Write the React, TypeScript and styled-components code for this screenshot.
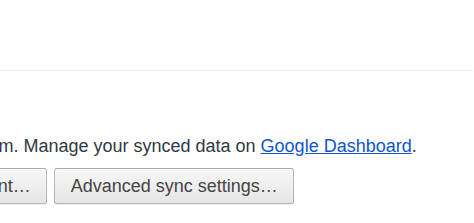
import React from "react";
import styled, { createGlobalStyle } from "styled-components";

const Global = createGlobalStyle`
  html, body { margin: 0; padding: 0; background: #fff; overflow: hidden; }
  body { width: 474px; height: 223px; }
`;

const Page = styled.div`
  width: 474px;
  height: 223px;
  overflow: hidden;
  font-family: "Liberation Sans", Arial, sans-serif;
  color: #303942;
`;

const TopArea = styled.div`
  height: 70px;
  width: 473px;
  border-bottom: 1px solid #eeeeee;
`;

const Section = styled.div`
  margin-left: -265px;
  padding-top: 63px;
  display: flex;
  flex-direction: column;
  gap: 10px;
`;

const Para = styled.p`
  margin: 0;
  font-size: 18px;
  line-height: 24px;
  white-space: nowrap;
`;

const Link = styled.a`
  color: #1155cc;
  text-decoration: underline;
`;

const ButtonRow = styled.div`
  display: flex;
  gap: 7px;
`;

const Button = styled.button`
  height: 36px;
  padding: 0 15.5px;
  font-family: "Liberation Sans", Arial, sans-serif;
  font-size: 18px;
  color: #444;
  background: linear-gradient(#f7f7f7, #e6e6e6);
  border: 1px solid rgba(0, 0, 0, 0.25);
  border-radius: 3px;
  box-shadow: 0 1px 0 rgba(0, 0, 0, 0.08), inset 0 1px 2px rgba(255, 255, 255, 0.75);
  white-space: nowrap;
`;

export default function App() {
  return (
    <Page>
      <Global />
      <TopArea />
      <Section>
        <Para>
          Signed in as someone@gmail.com. Manage your synced data on{" "}
          <Link href="#">Google Dashboard</Link>.
        </Para>
        <ButtonRow>
          <Button>Disconnect your Google Account…</Button>
          <Button>Advanced sync settings…</Button>
        </ButtonRow>
      </Section>
    </Page>
  );
}
